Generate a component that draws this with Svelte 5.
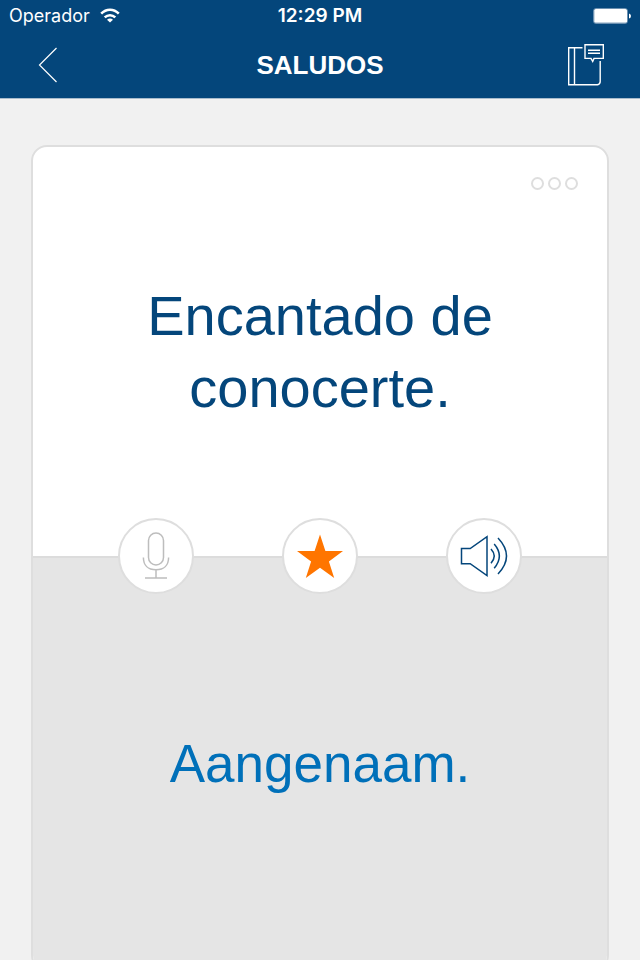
<script>
  let { category = 'SALUDOS', phrase = 'Encantado de conocerte.', translation = 'Aangenaam.' } = $props();
  let favorite = $state(true);
</script>

<div class="screen">
  <header>
    <div class="status">
      <div class="carrier">
        <span>Operador</span>
        <svg width="20" height="16" viewBox="0 0 20 16" aria-hidden="true">
          <g fill="none" stroke="#fff" stroke-width="2.5">
            <path d="M1.2 5.7C6.2 .5 13.8 .5 18.8 5.7" />
            <path d="M4.7 9.4C7.7 6.4 12.3 6.4 15.3 9.4" />
          </g>
          <path d="M10 14.6 7 11.7Q10 9.1 13 11.7Z" fill="#fff" />
        </svg>
      </div>
      <time>12:29 PM</time>
      <svg class="battery" width="38" height="16" viewBox="0 0 38 16" aria-hidden="true">
        <rect x=".5" y=".5" width="34" height="15" rx="2.5" fill="none" stroke="#6c90b0" />
        <rect x="1.2" y="1" width="32.8" height="13.8" rx="1.5" fill="#fff" />
        <path d="M36 5.5Q38 6 38 8T36 10.5Z" fill="#fff" />
      </svg>
    </div>
    <nav>
      <button class="tool" aria-label="Volver">
        <svg width="40" height="44" viewBox="0 1 40 44">
          <path d="M28.5 6 11.5 23 28.5 40" fill="none" stroke="#fff" stroke-width="1.2" />
        </svg>
      </button>
      <h1>{category}</h1>
      <button class="tool" aria-label="Cuaderno de frases">
        <svg width="40" height="44" viewBox="0 1 40 44">
          <g fill="none" stroke="#fff" stroke-width="1.4">
            <path d="M18.5 5.8H4.7V42.8H33.5Q36.2 42.2 36.2 39.5V19M10.5 5.8V42.8" />
            <path d="M21 2.7H39.3V16.4H30L28.7 19.5 27 16.4H21Z" />
            <path d="M24 8.3H36M24 11.3H36" />
          </g>
        </svg>
      </button>
    </nav>
  </header>

  <main>
    <article class="card">
      <section class="front">
        <button class="more" aria-label="Más opciones">
          <span></span><span></span><span></span>
        </button>
        <p>{phrase}</p>
        <div class="actions">
          <button aria-label="Grabar">
            <svg width="50" height="50" viewBox="0 0 50 50">
              <g fill="none" stroke="#bdbdbd" stroke-width="1.5">
                <rect x="17.5" y="2" width="15" height="32" rx="7.5" />
                <path d="M12.4 26.5C12.4 34 17 38.8 25 38.8S37.6 34 37.6 26.5M25 38.8V47M14 47H36" />
              </g>
            </svg>
          </button>
          <button aria-label="Favorito" aria-pressed={favorite} onclick={() => (favorite = !favorite)}>
            <svg width="50" height="50" viewBox="0 0 50 50">
              <path
                d="M25 3.5 30.4 20H48L33.9 30.4 39.2 47 25 36.8 10.8 47 16.1 30.4 2 20H19.6Z"
                fill={favorite ? '#ff7500' : '#dcdcdc'}
              />
            </svg>
          </button>
          <button aria-label="Escuchar">
            <svg width="50" height="50" viewBox="0 0 50 50">
              <g fill="none" stroke="#04467b" stroke-width="1.5">
                <path d="M2.5 17.5H11.2L28 5.7V44.6L11.2 32.7H2.5Z" />
                <path d="M32 18Q38.5 25 32 32.3M35.2 13Q45.5 25 35.2 37.3M39 7Q56 25 39 43" />
              </g>
            </svg>
          </button>
        </div>
      </section>
      <section class="back">
        <p>{translation}</p>
      </section>
    </article>
  </main>
</div>

<style>
  .screen {
    display: flex;
    flex-direction: column;
    height: 100vh;
    overflow: hidden;
    background: #f1f1f1;
    font-family: 'Liberation Sans', Arial, sans-serif;
  }

  button {
    margin: 0;
    padding: 0;
    border: 0;
    background: none;
    cursor: pointer;
  }

  svg {
    display: block;
  }

  header {
    flex: none;
    background: #04467b;
    border-bottom: 1px solid #a9bccd;
    color: #fff;
  }

  .status {
    display: grid;
    grid-template-columns: 1fr auto 1fr;
    align-items: center;
    height: 32px;
    padding: 0 9px;
    font-family: Inter, sans-serif;
    font-size: 18px;
    line-height: 32px;
  }

  .carrier {
    display: flex;
    align-items: center;
    gap: 10px;
  }

  time {
    font-size: 19px;
    font-weight: 600;
  }

  .battery {
    justify-self: end;
  }

  nav {
    display: flex;
    align-items: center;
    justify-content: space-between;
    height: 66px;
    padding: 0 28px;
  }

  .tool {
    width: 48px;
  }

  h1 {
    margin: 0;
    font-size: 26px;
    line-height: 32px;
  }

  main {
    flex: none;
    padding: 46px 31px;
  }

  .card {
    display: grid;
    grid-template-rows: 1fr 1fr;
    box-sizing: border-box;
    min-height: calc(100vh - 134px);
    border: 2px solid #dedede;
    border-radius: 16px;
    background: #fff;
  }

  section {
    display: flex;
    align-items: center;
    justify-content: center;
    text-align: center;
  }

  .front {
    position: relative;
    color: #04467b;
    border-bottom: 2px solid #dcdcdc;
  }

  .back {
    border-radius: 0 0 14px 14px;
    background: #e5e5e5;
    color: #0070b9;
  }

  p {
    max-width: 400px;
    margin: 0;
    font-size: 56px;
    line-height: 72px;
  }

  .back p {
    font-size: 53px;
  }

  .more {
    position: absolute;
    top: 29px;
    right: 28px;
    display: flex;
    gap: 4px;
    padding: 1px;
  }

  .more span {
    box-sizing: border-box;
    width: 13px;
    height: 13px;
    border: 2px solid #dedede;
    border-radius: 50%;
  }

  .actions {
    position: absolute;
    top: 100%;
    left: 0;
    right: 0;
    display: flex;
    justify-content: center;
    gap: 88px;
    transform: translateY(-50%);
  }

  .actions button {
    display: flex;
    align-items: center;
    justify-content: center;
    box-sizing: border-box;
    width: 76px;
    height: 76px;
    border: 2px solid #dedede;
    border-radius: 50%;
    background: #fff;
  }
</style>
